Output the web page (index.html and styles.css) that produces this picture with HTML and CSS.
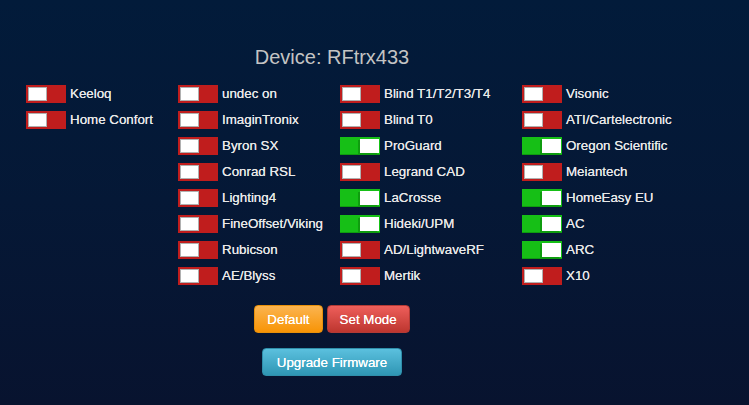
FILE: index.html
```html
<!DOCTYPE html>
<html>
<head>
<meta charset="utf-8">
<link rel="stylesheet" href="styles.css">
</head>
<body>
<div class="page">
  <h1 class="title">Device: RFtrx433</h1>
  <div class="grid">
    <div class="col c1">
      <div class="item"><span class="tg off"><span class="knob"></span></span><span class="lbl">Keeloq</span></div>
      <div class="item"><span class="tg off"><span class="knob"></span></span><span class="lbl">Home Confort</span></div>
    </div>
    <div class="col c2">
      <div class="item"><span class="tg off"><span class="knob"></span></span><span class="lbl">undec on</span></div>
      <div class="item"><span class="tg off"><span class="knob"></span></span><span class="lbl">ImaginTronix</span></div>
      <div class="item"><span class="tg off"><span class="knob"></span></span><span class="lbl">Byron SX</span></div>
      <div class="item"><span class="tg off"><span class="knob"></span></span><span class="lbl">Conrad RSL</span></div>
      <div class="item"><span class="tg off"><span class="knob"></span></span><span class="lbl">Lighting4</span></div>
      <div class="item"><span class="tg off"><span class="knob"></span></span><span class="lbl">FineOffset/Viking</span></div>
      <div class="item"><span class="tg off"><span class="knob"></span></span><span class="lbl">Rubicson</span></div>
      <div class="item"><span class="tg off"><span class="knob"></span></span><span class="lbl">AE/Blyss</span></div>
    </div>
    <div class="col c3">
      <div class="item"><span class="tg off"><span class="knob"></span></span><span class="lbl">Blind T1/T2/T3/T4</span></div>
      <div class="item"><span class="tg off"><span class="knob"></span></span><span class="lbl">Blind T0</span></div>
      <div class="item"><span class="tg on"><span class="knob"></span></span><span class="lbl">ProGuard</span></div>
      <div class="item"><span class="tg off"><span class="knob"></span></span><span class="lbl">Legrand CAD</span></div>
      <div class="item"><span class="tg on"><span class="knob"></span></span><span class="lbl">LaCrosse</span></div>
      <div class="item"><span class="tg on"><span class="knob"></span></span><span class="lbl">Hideki/UPM</span></div>
      <div class="item"><span class="tg off"><span class="knob"></span></span><span class="lbl">AD/LightwaveRF</span></div>
      <div class="item"><span class="tg off"><span class="knob"></span></span><span class="lbl">Mertik</span></div>
    </div>
    <div class="col c4">
      <div class="item"><span class="tg off"><span class="knob"></span></span><span class="lbl">Visonic</span></div>
      <div class="item"><span class="tg off"><span class="knob"></span></span><span class="lbl">ATI/Cartelectronic</span></div>
      <div class="item"><span class="tg on"><span class="knob"></span></span><span class="lbl">Oregon Scientific</span></div>
      <div class="item"><span class="tg off"><span class="knob"></span></span><span class="lbl">Meiantech</span></div>
      <div class="item"><span class="tg on"><span class="knob"></span></span><span class="lbl">HomeEasy EU</span></div>
      <div class="item"><span class="tg on"><span class="knob"></span></span><span class="lbl">AC</span></div>
      <div class="item"><span class="tg on"><span class="knob"></span></span><span class="lbl">ARC</span></div>
      <div class="item"><span class="tg off"><span class="knob"></span></span><span class="lbl">X10</span></div>
    </div>
  </div>
  <div class="btnrow">
    <button class="btn warn">Default</button>
    <button class="btn danger">Set Mode</button>
  </div>
  <div class="btnrow second">
    <button class="btn info">Upgrade Firmware</button>
  </div>
</div>
</body>
</html>
```

FILE: styles.css
```css
html, body {
  margin: 0;
  padding: 0;
  height: 100%;
}
body {
  background: linear-gradient(to bottom, #021b3a 0%, #051836 50%, #08132f 100%);
  font-family: "Liberation Sans", Arial, sans-serif;
  color: #e6e6e6;
  font-size: 13.33px;
}
.page {
  width: 664px;
  padding-top: 45px;
}
.title {
  margin: 0;
  text-align: center;
  font-size: 20px;
  font-weight: normal;
  color: #c4c4c4;
  line-height: 24px;
  height: 24px;
}
.grid {
  display: flex;
  margin-top: 16px;
  padding-left: 26px;
  width: 720px;
}
.col {
  display: flex;
  flex-direction: column;
  gap: 8px;
  flex: none;
}
.c1 { width: 152px; }
.c2 { width: 162px; }
.c3 { width: 182px; }
.c4 { width: 190px; }
.item {
  display: flex;
  align-items: center;
  height: 18px;
  white-space: nowrap;
}
.tg {
  position: relative;
  width: 40px;
  height: 18px;
  flex: none;
  box-sizing: border-box;
}
.tg.off { background: #c01d1d; }
.tg.on { background: #16bf16; box-shadow: inset 0 -1px 0 #0f9c0f; }
.knob {
  position: absolute;
  top: 2px;
  width: 19px;
  height: 14px;
  background: #fff;
  box-sizing: border-box;
}
.tg.off .knob { left: 2px; border: 1px solid #b0b0b0; }
.tg.on .knob { right: 1px; box-shadow: -2px 1px 0 #0f9c0f; }
.lbl {
  margin-left: 4px;
  color: #e8e8e8;
  text-shadow: 0 0 0.6px #e8e8e8;
  line-height: 18px;
}
.btnrow {
  display: flex;
  justify-content: center;
  gap: 4px;
  margin-top: 20px;
}
.btnrow.second {
  margin-top: 15px;
}
.btn {
  font-family: "Liberation Sans", Arial, sans-serif;
  font-size: 13.33px;
  color: #fff;
  height: 28px;
  padding: 0 12px;
  border-radius: 4px;
  border: 1px solid rgba(0,0,0,0.15);
  text-shadow: 0 0 0.5px #fff;
}
.btn.warn {
  background: linear-gradient(to bottom, #fbb450, #f89406);
  border-color: #e8900a;
}
.btn.danger {
  background: linear-gradient(to bottom, #ee5f5b, #bd362f);
  border-color: #b33a35;
}
.btn.info {
  background: linear-gradient(to bottom, #5bc0de, #2f96b4);
  border-color: #2f8fab;
  padding: 0 14px;
}
```
